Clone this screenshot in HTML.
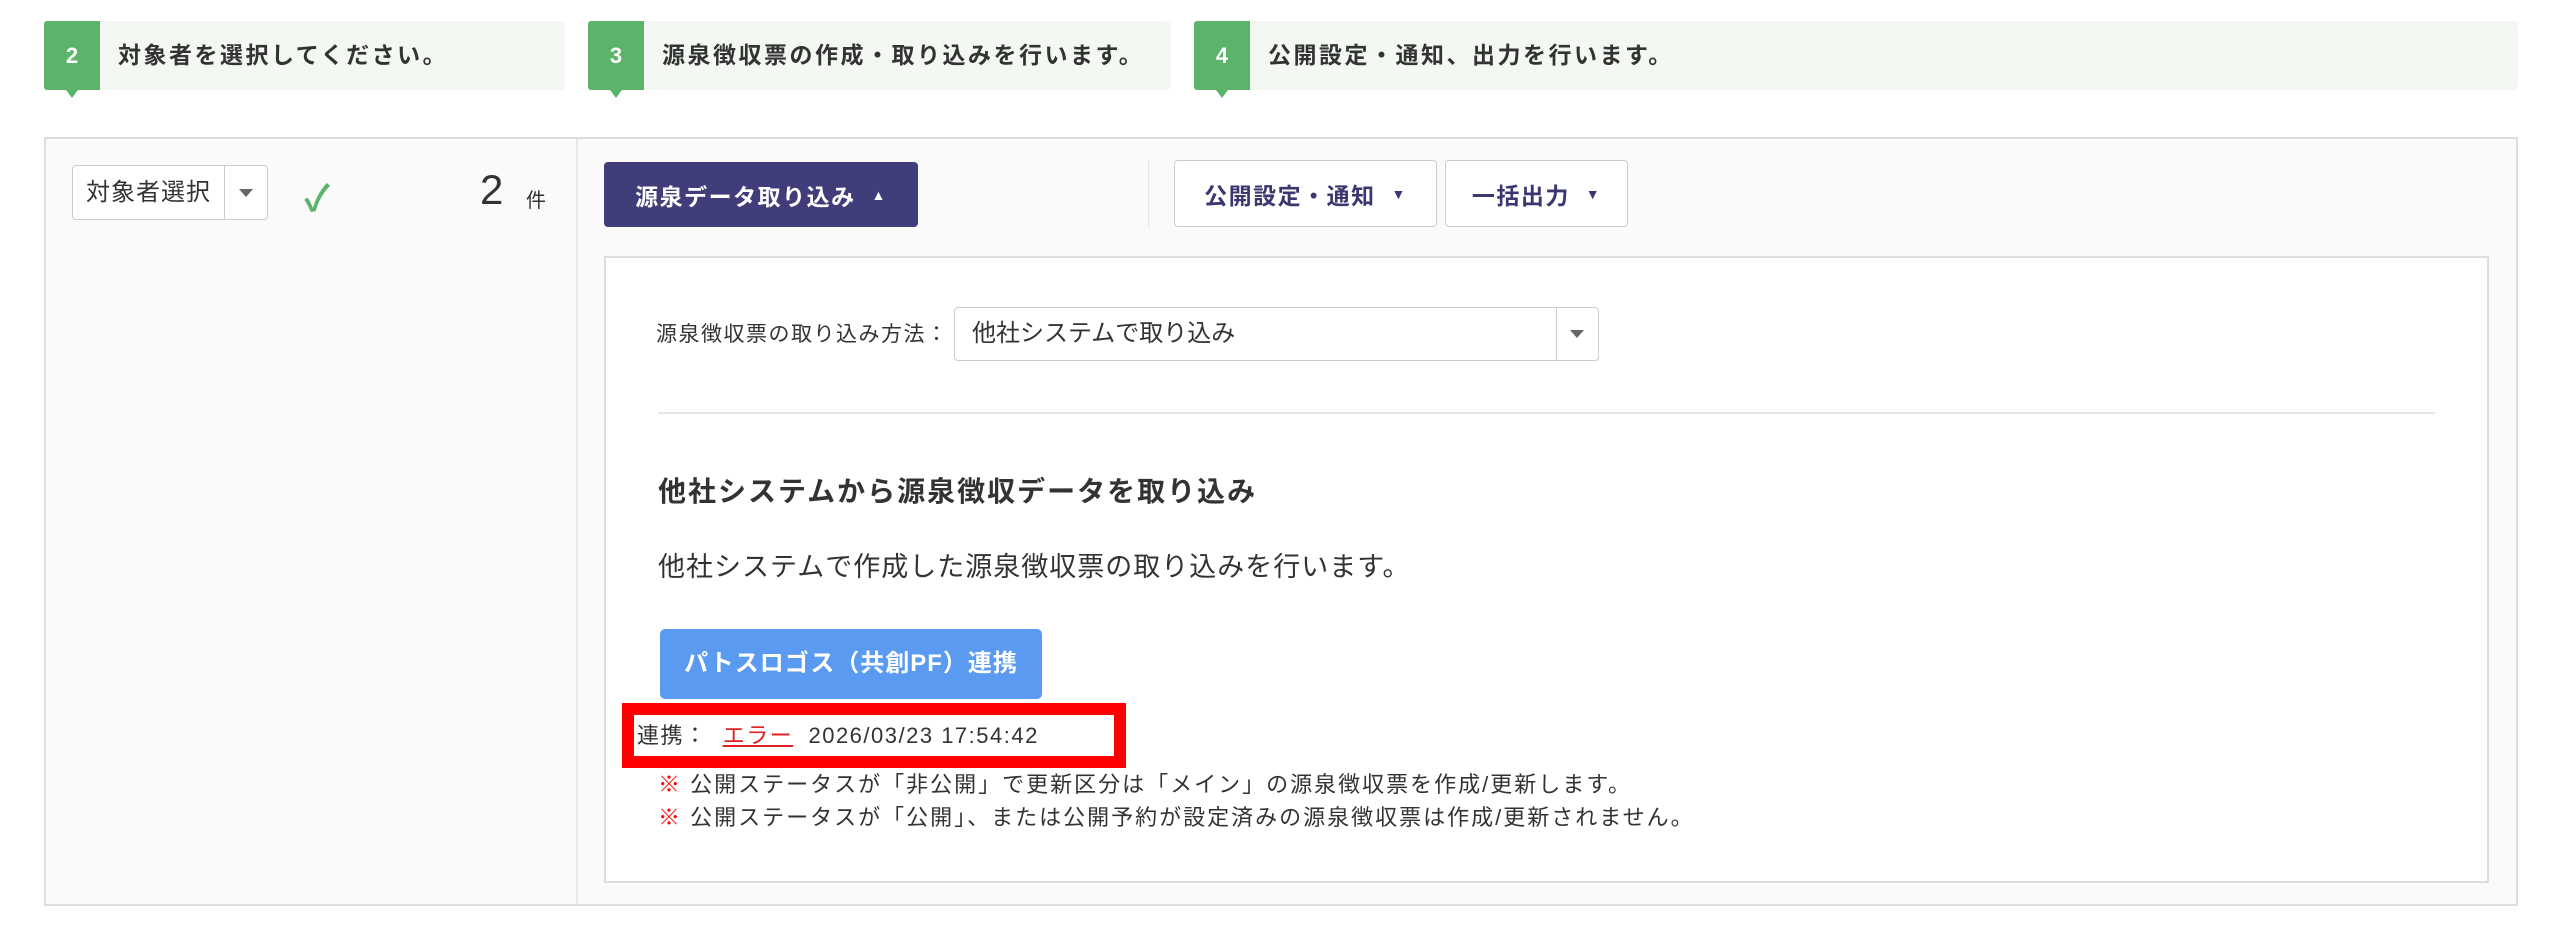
<!DOCTYPE html>
<html><head><meta charset="utf-8"><style>
*{box-sizing:border-box;margin:0;padding:0}
body{width:2560px;height:940px;background:#fff;font-family:"Liberation Sans","Noto Sans CJK JP",sans-serif;color:#333;position:relative;overflow:hidden}
.a{position:absolute}
.step{position:absolute;top:21px;height:69px;background:#f3f9f2;border-radius:4px}
.tab{position:absolute;left:0;top:0;width:56px;height:69px;background:#5cb46a;color:#fff;font-weight:bold;font-size:22px;display:flex;align-items:center;justify-content:center;border-radius:3px 0 0 3px}
.tab:after{content:"";position:absolute;bottom:-8px;left:22px;border-left:6px solid transparent;border-right:6px solid transparent;border-top:8px solid #5cb46a}
.st{position:absolute;left:74px;top:0;line-height:69px;font-size:23px;letter-spacing:2.5px;font-weight:bold;color:#333}
.btn{position:absolute;border:1px solid #ccc;border-radius:4px;background:#fff;font-weight:bold;font-size:23px;letter-spacing:1.5px;color:#3a3870;display:flex;align-items:center;justify-content:center}
</style></head><body>
<div class="step" style="left:44px;width:521px"><div class="tab">2</div><div class="st">対象者を選択してください。</div></div>
<div class="step" style="left:588px;width:583px"><div class="tab">3</div><div class="st">源泉徴収票の作成・取り込みを行います。</div></div>
<div class="step" style="left:1194px;width:1324px"><div class="tab">4</div><div class="st" style="left:74px">公開設定・通知、出力を行います。</div></div>

<div class="a" style="left:44px;top:137px;width:2474px;height:769px;background:#fafafa;border:2px solid #ddd"></div>
<div class="a" style="left:576px;top:139px;width:2px;height:765px;background:#e8e8e8"></div>

<div class="a" style="left:72px;top:165px;width:196px;height:55px;background:#fff;border:1px solid #ccc;border-radius:4px"></div>
<div class="a" style="left:224px;top:166px;width:1px;height:53px;background:#ccc"></div>
<div class="a" style="left:86px;top:165px;line-height:55px;font-size:24px;letter-spacing:1px;color:#333">対象者選択</div>
<div class="a" style="left:239px;top:189px;border-left:7px solid transparent;border-right:7px solid transparent;border-top:8px solid #666"></div>
<div class="a" style="left:304px;top:170px;font-size:36px;font-weight:bold;color:#5cb46a">✓</div>
<div class="a" style="left:480px;top:166px;font-size:42px;color:#333">2</div>
<div class="a" style="left:526px;top:184px;font-size:20px;color:#333">件</div>

<div class="btn" style="left:604px;top:162px;width:314px;height:65px;background:#403e7a;border-color:#403e7a;color:#fff">源泉データ取り込み&nbsp;&nbsp;<span style="font-size:14px">▲</span></div>
<div class="a" style="left:1148px;top:160px;width:1px;height:68px;background:#e4e4e4"></div>
<div class="btn" style="left:1174px;top:160px;width:263px;height:67px">公開設定・通知&nbsp;&nbsp;<span style="font-size:14px">▼</span></div>
<div class="btn" style="left:1445px;top:160px;width:183px;height:67px">一括出力&nbsp;&nbsp;<span style="font-size:14px">▼</span></div>

<div class="a" style="left:604px;top:256px;width:1885px;height:627px;background:#fff;border:2px solid #ddd"></div>
<div class="a" style="left:656px;top:320px;line-height:30px;font-size:21px;letter-spacing:1.5px;color:#333">源泉徴収票の取り込み方法：</div>
<div class="a" style="left:954px;top:307px;width:645px;height:54px;border:1px solid #ccc;border-radius:4px;background:#fff"></div>
<div class="a" style="left:1556px;top:308px;width:1px;height:52px;background:#ccc"></div>
<div class="a" style="left:972px;top:307px;line-height:54px;font-size:24px;color:#333">他社システムで取り込み</div>
<div class="a" style="left:1570px;top:330px;border-left:7px solid transparent;border-right:7px solid transparent;border-top:8px solid #666"></div>
<div class="a" style="left:658px;top:412px;width:1777px;height:2px;background:#e6e6e6"></div>
<div class="a" style="left:658px;top:470px;font-size:28px;letter-spacing:2px;font-weight:bold;color:#333">他社システムから源泉徴収データを取り込み</div>
<div class="a" style="left:658px;top:545px;font-size:27px;letter-spacing:1px;color:#333">他社システムで作成した源泉徴収票の取り込みを行います。</div>
<div class="a" style="left:660px;top:629px;width:382px;height:70px;background:#5a9af0;border-radius:5px;color:#fff;font-weight:bold;font-size:24px;line-height:70px;text-align:center;letter-spacing:1px">パトスロゴス（共創PF）連携</div>
<div class="a" style="left:622px;top:703px;width:504px;height:65px;border:12px solid #f00"></div>
<div class="a" style="left:637px;top:720px;line-height:32px;font-size:22px;letter-spacing:1.5px;color:#333">連携：&nbsp;&nbsp;<span style="color:#e02020;text-decoration:underline">エラー</span>&nbsp;&nbsp;2026/03/23 17:54:42</div>
<div class="a" style="left:658px;top:768px;line-height:33px;font-size:22px;letter-spacing:2px;color:#333"><span style="color:#f00;font-weight:bold">※</span> 公開ステータスが「非公開」で更新区分は「メイン」の源泉徴収票を作成/更新します。<br><span style="color:#f00;font-weight:bold">※</span> 公開ステータスが「公開」、または公開予約が設定済みの源泉徴収票は作成/更新されません。</div>
</body></html>
